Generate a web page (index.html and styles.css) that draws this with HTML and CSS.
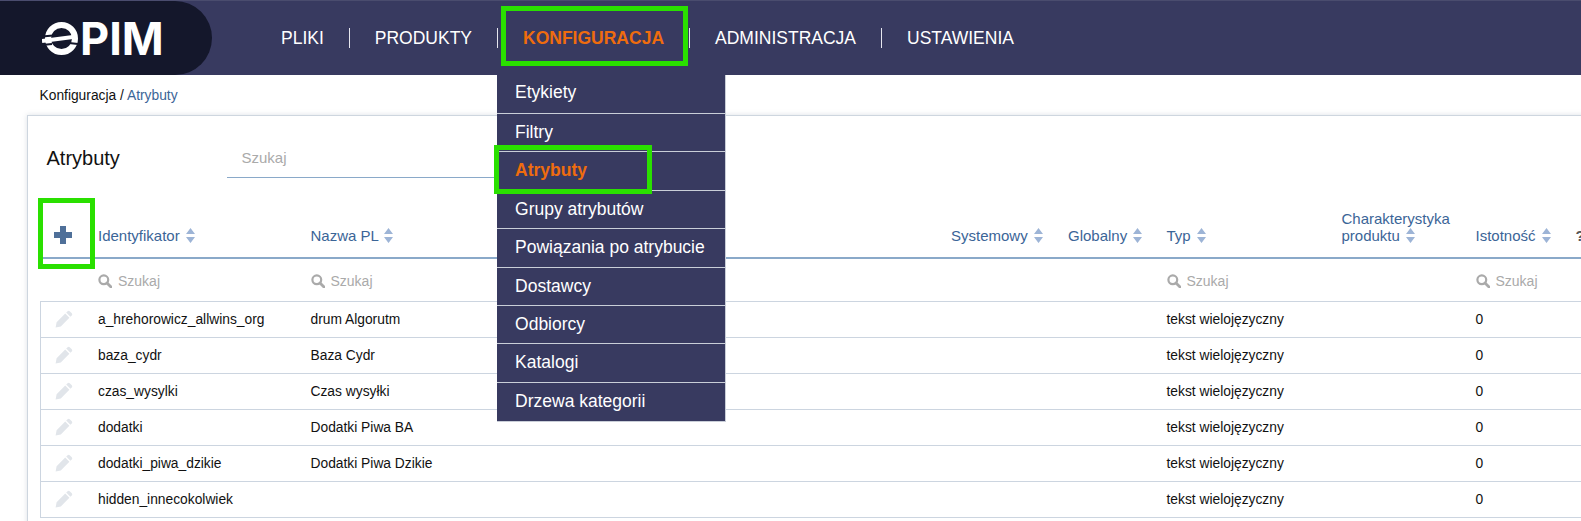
FILE: index.html
```html
<!DOCTYPE html>
<html lang="pl">
<head>
<meta charset="utf-8">
<title>ePIM - Atrybuty</title>
<link rel="stylesheet" href="styles.css">
</head>
<body>
<svg class="defs" width="0" height="0" aria-hidden="true">
  <symbol id="sort" viewBox="0 0 9 15"><path d="M4.5 0 9 6H0zM0 9h9l-4.5 6z"/></symbol>
  <symbol id="search" viewBox="0 0 14 14"><circle cx="5.8" cy="5.8" r="4.4" fill="none" stroke="currentColor" stroke-width="2.2"/><path d="M9 9l4 4" stroke="currentColor" stroke-width="2.8" stroke-linecap="round"/></symbol>
  <symbol id="pencil" viewBox="0 0 18 18"><path d="M12.6 1.2a1.5 1.5 0 0 1 2.1 0l2.1 2.1a1.5 1.5 0 0 1 0 2.1l-1.4 1.4-4.2-4.2zM10.2 3.6l4.2 4.2-8.6 8.6-5.2 1.2 1-5.4z"/></symbol>
</svg>
<header class="topbar">
  <a class="logo">
    <svg class="logo-mark" viewBox="0 0 36 33" aria-hidden="true">
      <circle cx="19.5" cy="16.500" r="13.500" fill="none" stroke="#fff" stroke-width="6"/>
      <path d="M0 14.500 11 13.500M0 23 10 22M27 21 36 22" fill="none" stroke="#14172b" stroke-width="2.200"/>
      <path d="M0 19 31 15" fill="none" stroke="#fff" stroke-width="4"/>
    </svg>
    <span class="logo-text">PIM</span>
  </a>
  <nav class="nav">
    <a class="nav-item">PLIKI</a>
    <a class="nav-item">PRODUKTY</a>
    <div class="nav-item nav-active">KONFIGURACJA
      <span class="mark mark-nav"></span>
      <ul class="menu">
        <li>Etykiety</li>
        <li>Filtry</li>
        <li class="menu-active">Atrybuty<span class="mark mark-menu"></span></li>
        <li>Grupy atrybutów</li>
        <li>Powiązania po atrybucie</li>
        <li>Dostawcy</li>
        <li>Odbiorcy</li>
        <li>Katalogi</li>
        <li>Drzewa kategorii</li>
      </ul>
    </div>
    <a class="nav-item">ADMINISTRACJA</a>
    <a class="nav-item">USTAWIENIA</a>
  </nav>
</header>
<div class="crumbs">Konfiguracja / <a class="crumb-link">Atrybuty</a></div>
<main class="card">
  <div class="card-head">
    <h1 class="title">Atrybuty</h1>
    <div class="main-search">Szukaj</div>
  </div>
  <table class="grid">
    <colgroup>
      <col class="c-act"><col class="c-id"><col class="c-name"><col class="c-sys"><col class="c-glob"><col class="c-type"><col class="c-char"><col class="c-imp"><col class="c-help">
    </colgroup>
    <thead>
      <tr class="head-row">
        <th class="add-cell"><span class="plus"></span><span class="mark mark-add"></span></th>
        <th>Identyfikator <svg class="sort"><use href="#sort"/></svg></th>
        <th>Nazwa PL <svg class="sort"><use href="#sort"/></svg></th>
        <th>Systemowy <svg class="sort"><use href="#sort"/></svg></th>
        <th>Globalny <svg class="sort"><use href="#sort"/></svg></th>
        <th>Typ <svg class="sort"><use href="#sort"/></svg></th>
        <th>Charakterystyka<br>produktu <svg class="sort"><use href="#sort"/></svg></th>
        <th>Istotność <svg class="sort"><use href="#sort"/></svg></th>
        <th class="help">?</th>
      </tr>
      <tr class="filter-row">
        <td></td>
        <td><svg class="lens"><use href="#search"/></svg>Szukaj</td>
        <td><svg class="lens"><use href="#search"/></svg>Szukaj</td>
        <td></td>
        <td></td>
        <td><svg class="lens"><use href="#search"/></svg>Szukaj</td>
        <td></td>
        <td><svg class="lens"><use href="#search"/></svg>Szukaj</td>
        <td></td>
      </tr>
    </thead>
    <tbody>
      <tr><td class="edit"><svg class="pen"><use href="#pencil"/></svg></td><td>a_hrehorowicz_allwins_org</td><td>drum Algorutm</td><td></td><td></td><td>tekst wielojęzyczny</td><td></td><td>0</td><td></td></tr>
      <tr><td class="edit"><svg class="pen"><use href="#pencil"/></svg></td><td>baza_cydr</td><td>Baza Cydr</td><td></td><td></td><td>tekst wielojęzyczny</td><td></td><td>0</td><td></td></tr>
      <tr><td class="edit"><svg class="pen"><use href="#pencil"/></svg></td><td>czas_wysylki</td><td>Czas wysyłki</td><td></td><td></td><td>tekst wielojęzyczny</td><td></td><td>0</td><td></td></tr>
      <tr><td class="edit"><svg class="pen"><use href="#pencil"/></svg></td><td>dodatki</td><td>Dodatki Piwa BA</td><td></td><td></td><td>tekst wielojęzyczny</td><td></td><td>0</td><td></td></tr>
      <tr><td class="edit"><svg class="pen"><use href="#pencil"/></svg></td><td>dodatki_piwa_dzikie</td><td>Dodatki Piwa Dzikie</td><td></td><td></td><td>tekst wielojęzyczny</td><td></td><td>0</td><td></td></tr>
      <tr><td class="edit"><svg class="pen"><use href="#pencil"/></svg></td><td>hidden_innecokolwiek</td><td></td><td></td><td></td><td>tekst wielojęzyczny</td><td></td><td>0</td><td></td></tr>
    </tbody>
  </table>
</main>
</body>
</html>
```

FILE: styles.css
```css
* { box-sizing: border-box; }
html, body { height: 100%; }
body {
  margin: 0;
  overflow: hidden;
  background: #fff;
  color: #111;
  font-family: "Liberation Sans", Arial, sans-serif;
  font-size: 14px;
}
.defs { position: absolute; }

.topbar {
  display: flex;
  height: 75px;
  background: #383a60;
  border-top: 1px solid #4a4c6e;
}
.logo {
  display: flex;
  align-items: center;
  width: 212px;
  height: 74px;
  padding-left: 42px;
  background: #14172b;
  border-radius: 0 42px 42px 0;
}
.logo-mark { width: 36px; height: 33px; flex: none; }
.logo-text {
  margin-left: 2px;
  color: #fff;
  font-family: Inter, sans-serif;
  font-weight: 700;
  font-size: 45px;
  line-height: 1;
}

.nav { display: flex; align-items: center; padding-left: 43px; height: 74px; }
.nav-item {
  position: relative;
  padding: 0 25px;
  color: #fff;
  font-size: 17.5px;
  line-height: 20px;
  border-left: 1px solid #e6e6ee;
}
.nav-item:first-child { border-left: 0; padding-left: 26px; }
.nav-active { color: #ef6c0e; font-weight: 700; }

.mark { position: absolute; border: 5px solid #2ae000; pointer-events: none; z-index: 3; }
.mark-nav { left: 3px; right: 1px; top: -22px; height: 60px; }
.mark-menu { left: -3px; top: -7px; width: 158px; height: 49px; }
.mark-add { left: -2px; top: 20px; width: 57px; height: 71px; }

.menu {
  position: absolute;
  left: -1px;
  top: 47px;
  z-index: 2;
  width: 229px;
  margin: 0;
  padding: 0;
  list-style: none;
  background: #383a60;
  border-right: 1px solid #c9ced8;
  border-bottom: 1px solid #c9ced8;
  font-weight: 400;
}
.menu li {
  position: relative;
  height: 38.4px;
  padding: 8px 0 0 18px;
  color: #fff;
  font-size: 17.5px;
  line-height: 20px;
  border-bottom: 1px solid #c9ced8;
}
.menu li:first-child { height: 39px; padding-top: 7px; }
.menu li:last-child { height: 37.8px; border-bottom: 0; }
.menu .menu-active { color: #ef6c0e; font-weight: 700; }

.crumbs {
  height: 40px;
  padding: 13px 0 0 39.5px;
  font-size: 13.8px;
  line-height: 16px;
  color: #111;
}
.crumb-link { color: #3b6597; }

.card {
  margin-left: 27px;
  width: 1620px;
  height: 600px;
  padding: 0 0 0 11.5px;
  background: #fff;
  border: 1px solid #ced6df;
  box-shadow: 0 0 5px rgba(120, 135, 155, .25);
}
.card-head { display: flex; align-items: center; height: 62px; padding-top: 21px; }
.title { margin: 0 0 0 7px; width: 180px; font-size: 20px; font-weight: 400; line-height: 24px; color: #111; }
.main-search {
  width: 272px;
  height: 41px;
  padding: 12px 0 0 15px;
  color: #aaa;
  font-size: 15px;
  line-height: 18px;
  border-bottom: 1px solid #8aa9c9;
}

.grid { table-layout: fixed; width: 1560px; border-collapse: collapse; }
.c-act { width: 58px; }
.c-id { width: 212.5px; }
.c-name { width: 640.5px; }
.c-sys { width: 117px; }
.c-glob { width: 98.5px; }
.c-type { width: 175px; }
.c-char { width: 134px; }
.c-imp { width: 100px; }
.head-row th {
  position: relative;
  height: 80px;
  padding: 0 0 13px;
  vertical-align: bottom;
  text-align: left;
  font-weight: 400;
  font-size: 15px;
  line-height: 17px;
  color: #3b6597;
  border-bottom: 2px solid #8aa9c9;
}
.sort { width: 9px; height: 15px; margin-left: 2px; vertical-align: -2px; fill: #9db4d6; }
.plus {
  position: absolute;
  left: 14px;
  top: 48px;
  width: 18px;
  height: 18px;
  background:
    linear-gradient(#4f7099, #4f7099) center / 18px 6px no-repeat,
    linear-gradient(#4f7099, #4f7099) center / 6px 18px no-repeat;
  border-radius: 2px;
}
.head-row .help { font-weight: 700; color: #555; }
.filter-row td {
  height: 43px;
  padding: 2px 0 0;
  color: #aaa;
  font-size: 14px;
  white-space: nowrap;
}
.lens { width: 14px; height: 14px; margin-right: 6px; vertical-align: -2px; color: #aaa; }
tbody tr { height: 36px; border: 1px solid #ccd5e0; border-right: 0; }
tbody td { padding: 0; font-size: 13.8px; color: #111; white-space: nowrap; }
tbody .edit { padding-left: 14px; }
.pen { display: block; width: 18px; height: 18px; fill: #e1e5ea; }
```
